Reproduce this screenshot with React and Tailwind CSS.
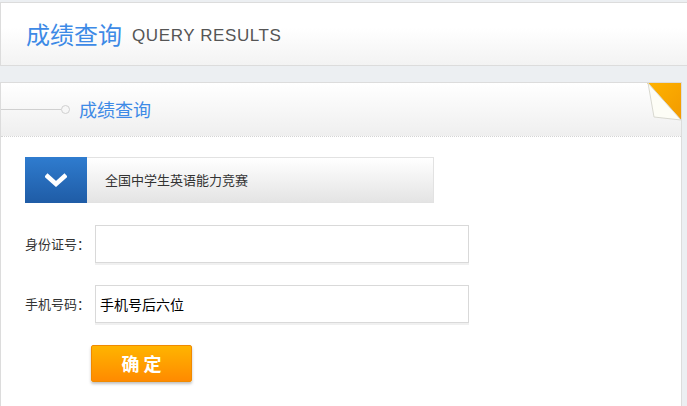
import { useState } from "react";

const font = { fontFamily: '"Microsoft YaHei", "Noto Sans CJK SC", sans-serif' };

function CornerFold() {
  return (
    <svg className="absolute right-0 top-0" width="34" height="40" viewBox="0 0 34 40">
      <defs>
        <linearGradient id="fold" x1="0" y1="0" x2="1" y2="1">
          <stop offset="0" stopColor="#ffb300" />
          <stop offset="1" stopColor="#f29a00" />
        </linearGradient>
      </defs>
      <polygon points="0,0 34,0 34,37" fill="url(#fold)" />
      <polygon points="1,0 34,37 7,34" fill="#fdfdf6" stroke="#d8d8d0" strokeWidth="1" />
    </svg>
  );
}

function Field({ label, placeholder, value, onChange }) {
  return (
    <div className="flex items-center">
      <span className="w-[70px] text-[13px] text-[#333]">{label}</span>
      <input
        value={value}
        onChange={(e) => onChange(e.target.value)}
        placeholder={placeholder}
        className="h-[38px] w-[374px] border border-[#d9d9d9] bg-white px-[4px] text-[14px] text-black shadow-[0_2px_0_#f0f0f0] outline-none placeholder:text-black"
        style={font}
      />
    </div>
  );
}

export default function App() {
  const [idNo, setIdNo] = useState("");
  const [phone, setPhone] = useState("");

  return (
    <div className="h-[406px] w-[687px] overflow-hidden bg-[#eceff2] pt-[2px]" style={font}>
      <div className="flex h-[64px] items-center border-y border-l border-[#dcdcdc] bg-gradient-to-b from-white from-40% to-[#f3f3f3] pl-[25px]">
        <span className="text-[24px] text-[#3d8ae6]">成绩查询</span>
        <span className="ml-[10px] mt-[4px] text-[17px] tracking-[0.6px] text-[#555]" style={{ fontFamily: '"Liberation Sans", Arial, sans-serif' }}>
          QUERY RESULTS
        </span>
      </div>

      <div className="mt-[16px] mr-[5px] border-x border-t border-[#dcdcdc] bg-white">
        <div className="relative flex h-[54px] items-center border-b border-dotted border-[#d5d5d5] bg-gradient-to-b from-white to-[#efefef]">
          <div className="h-px w-[60px] bg-[#d0d0d0]" />
          <div className="h-[9px] w-[9px] rounded-full border border-[#d0d0d0] bg-[#f7f7f7]" />
          <span className="ml-[9px] text-[18px] text-[#3d8ae6]">成绩查询</span>
          <CornerFold />
        </div>

        <div className="px-[24px] pt-[20px] pb-[24px]">
          <div className="flex h-[46px] w-[409px]">
            <div className="flex w-[62px] items-center justify-center bg-gradient-to-b from-[#2f7ccf] to-[#1f5ca6]">
              <svg width="22" height="14" viewBox="0 0 22 14">
                <path d="M1 2 L11 11 L21 2" fill="none" stroke="white" strokeWidth="4.5" />
              </svg>
            </div>
            <div className="flex flex-1 items-center border border-l-0 border-[#e2e2e2] bg-gradient-to-b from-white to-[#e4e4e4] pl-[18px] text-[13px] text-[#333]">
              全国中学生英语能力竞赛
            </div>
          </div>

          <div className="mt-[22px] flex flex-col gap-[22px]">
            <Field label="身份证号：" value={idNo} onChange={setIdNo} />
            <Field label="手机号码：" placeholder="手机号后六位" value={phone} onChange={setPhone} />
          </div>

          <button
            className="ml-[66px] mt-[22px] h-[37px] w-[101px] rounded-[2px] border border-[#f08a00] bg-gradient-to-b from-[#ffb400] to-[#ff8a00] text-[18px] font-bold text-white shadow-[0_2px_3px_rgba(0,0,0,0.25)]"
            style={font}
          >
            确 定
          </button>
        </div>
      </div>
    </div>
  );
}
